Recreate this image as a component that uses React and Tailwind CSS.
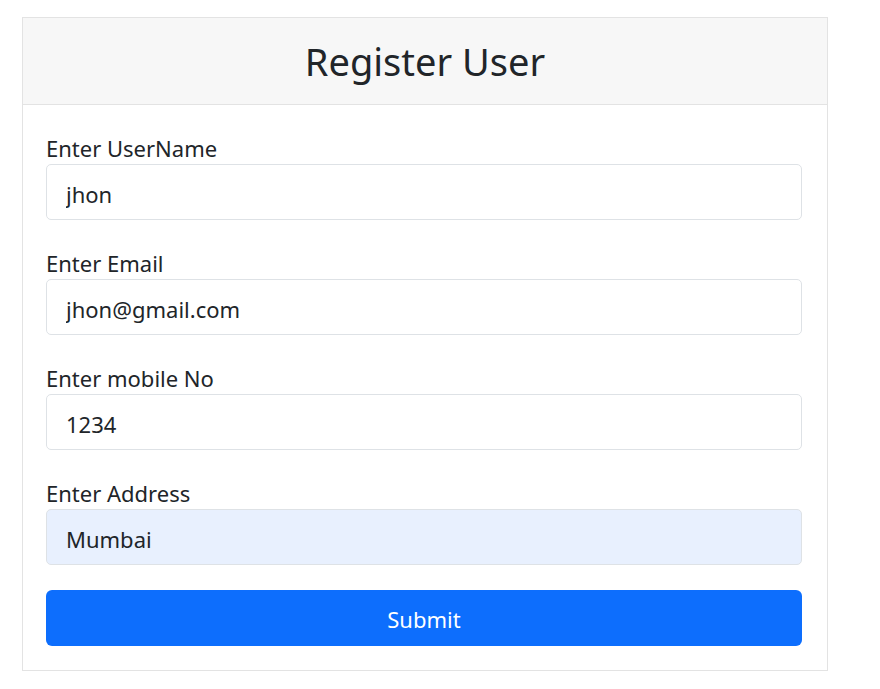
export default function App() {
  const fields = [
    { label: "Enter UserName", value: "jhon" },
    { label: "Enter Email", value: "jhon@gmail.com" },
    { label: "Enter mobile No", value: "1234" },
    { label: "Enter Address", value: "Mumbai", filled: true },
  ];

  return (
    <div className="min-h-[689px] w-[880px] bg-white font-['Noto_Sans','Open_Sans',sans-serif] text-[#212529] pt-[17px] pl-[22px]">
      <div className="w-[806px] border border-[#e3e3e3] bg-white">
        {/* Header */}
        <div className="h-[87px] border-b border-[#e3e3e3] bg-[#f7f7f7] flex items-center justify-center">
          <h1 className="text-[38px] font-normal leading-none">Register User</h1>
        </div>

        {/* Body */}
        <div className="pl-[23px] pr-[25px] pt-[27px] pb-[24px]">
          {fields.map((f, i) => (
            <div key={i} className={i < fields.length - 1 ? "mb-[27px]" : "mb-[25px]"}>
              <label className="block text-[22px] leading-[32px]">{f.label}</label>
              <input
                readOnly
                value={f.value}
                className={
                  "w-full h-[56px] rounded-[5px] border border-[#dee2e6] px-[19px] pt-[3px] text-[22px] text-[#212529] outline-none " +
                  (f.filled ? "bg-[#e8f0fe] border-[#d4d9e0]" : "bg-white")
                }
              />
            </div>
          ))}
          <button className="w-full h-[56px] rounded-[6px] bg-[#0d6efd] pt-[3px] text-white text-[22px]">
            Submit
          </button>
        </div>
      </div>
    </div>
  );
}
